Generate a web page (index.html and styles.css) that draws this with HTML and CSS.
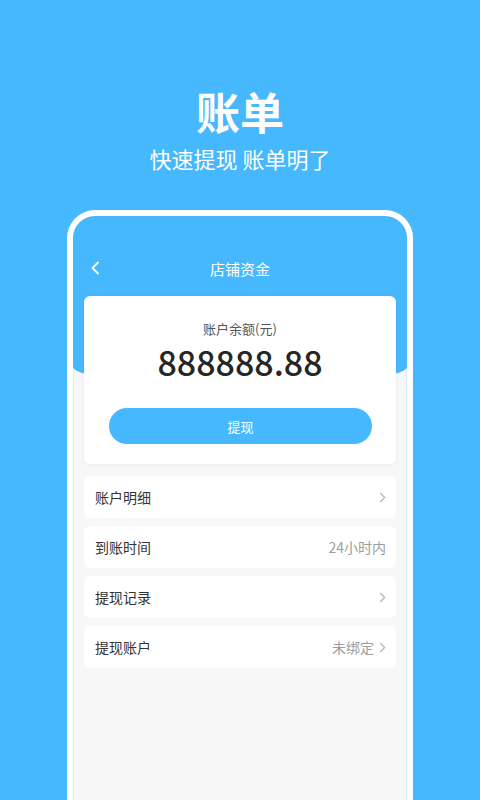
FILE: index.html
```html
<!DOCTYPE html>
<html lang="zh-CN">
<head>
<meta charset="utf-8">
<title>账单</title>
<link rel="stylesheet" href="styles.css">
</head>
<body>
<div class="page">
  <header class="intro">
    <h1 class="intro-title">账单</h1>
    <p class="intro-sub">快速提现 账单明了</p>
  </header>
  <div class="phone">
    <div class="screen">
      <div class="hero">
        <div class="nav">
          <svg class="nav-back" width="10" height="14" viewBox="0 0 10 14"><path d="M8 1.5 L2.5 7 L8 12.5" fill="none" stroke="#fff" stroke-width="1.8" stroke-linecap="round" stroke-linejoin="round"/></svg>
          <span class="nav-title">店铺资金</span>
        </div>
      </div>
      <div class="balance-card">
        <div class="balance-label">账户余额(元)</div>
        <div class="balance-amount">888888.88</div>
        <div class="withdraw-btn">提现</div>
      </div>
      <ul class="menu">
        <li class="menu-row"><span class="menu-name">账户明细</span><span class="menu-right"><svg class="chev" width="7" height="11" viewBox="0 0 7 11"><path d="M1.2 1 L5.6 5.5 L1.2 10" fill="none" stroke="#b5b5b5" stroke-width="1.3"/></svg></span></li>
        <li class="menu-row"><span class="menu-name">到账时间</span><span class="menu-right"><span class="menu-value">24小时内</span></span></li>
        <li class="menu-row"><span class="menu-name">提现记录</span><span class="menu-right"><svg class="chev" width="7" height="11" viewBox="0 0 7 11"><path d="M1.2 1 L5.6 5.5 L1.2 10" fill="none" stroke="#b5b5b5" stroke-width="1.3"/></svg></span></li>
        <li class="menu-row"><span class="menu-name">提现账户</span><span class="menu-right"><span class="menu-value">未绑定</span><svg class="chev" width="7" height="11" viewBox="0 0 7 11"><path d="M1.2 1 L5.6 5.5 L1.2 10" fill="none" stroke="#b5b5b5" stroke-width="1.3"/></svg></span></li>
      </ul>
    </div>
  </div>
</div>
</body>
</html>
```

FILE: styles.css
```css
* { box-sizing: border-box; }
html, body {
  margin: 0;
  padding: 0;
  height: 100%;
  overflow: hidden;
}
body {
  background: #46b8fe;
  font-family: "Noto Sans CJK SC", "Noto Sans", sans-serif;
}
.page {
  width: 480px;
  height: 800px;
  overflow: hidden;
  display: flex;
  flex-direction: column;
  align-items: center;
}
.intro {
  text-align: center;
  color: #fff;
  padding-top: 81px;
}
.intro-title {
  margin: 0;
  font-size: 44px;
  line-height: 60px;
  font-weight: 700;
  letter-spacing: 0;
}
.intro-sub {
  margin: 2px 0 0 0;
  font-size: 22px;
  line-height: 30px;
  font-weight: 400;
}
.phone {
  margin-top: 37px;
  width: 346px;
  flex: 0 0 auto;
  height: 640px;
  border: 6px solid #fff;
  border-bottom: none;
  border-radius: 28px 28px 0 0;
  overflow: hidden;
  background: #f7f7f7;
  box-shadow: inset 0 0 0 1px #d6efff;
}
.screen {
  width: 334px;
  display: flex;
  flex-direction: column;
  align-items: center;
}
.hero {
  width: 334px;
  height: 169px;
  background: #46b8fe;
  border-radius: 0 0 50% 50% / 0 0 18px 18px;
  padding-top: 30px;
}
.nav {
  height: 44px;
  display: flex;
  align-items: center;
  justify-content: center;
  position: relative;
}
.nav-back {
  position: absolute;
  left: 17px;
  top: 15px;
}
.nav-title {
  color: #fff;
  font-size: 15px;
}
.balance-card {
  position: relative;
  margin-top: -89px;
  width: 312px;
  height: 168px;
  background: #fff;
  border-radius: 6px;
  box-shadow: 0 1px 4px rgba(0,0,0,0.05);
  display: flex;
  flex-direction: column;
  align-items: center;
  padding: 23px 0 20px 0;
}
.balance-label {
  font-size: 13px;
  line-height: 19px;
  color: #555;
}
.balance-amount {
  font-size: 34px;
  line-height: 48px;
  font-weight: 500;
  color: #262626;
}
.withdraw-btn {
  margin-top: auto;
  width: 263px;
  height: 36px;
  border-radius: 18px;
  background: #46b8fe;
  color: #fff;
  font-size: 13px;
  display: flex;
  align-items: center;
  justify-content: center;
  margin-left: 1px;
}
.menu {
  list-style: none;
  margin: 12px 0 0 0;
  padding: 0;
  width: 312px;
  display: flex;
  flex-direction: column;
  gap: 8px;
}
.menu-row {
  height: 42px;
  background: #fff;
  border-radius: 6px;
  display: flex;
  align-items: center;
  justify-content: space-between;
  padding: 0 10px 0 11px;
}
.menu-name {
  font-size: 14px;
  color: #333;
}
.menu-right {
  display: flex;
  align-items: center;
  gap: 5px;
}
.menu-value {
  font-size: 14px;
  color: #9d9d9d;
}
.chev { display: block; }
```
